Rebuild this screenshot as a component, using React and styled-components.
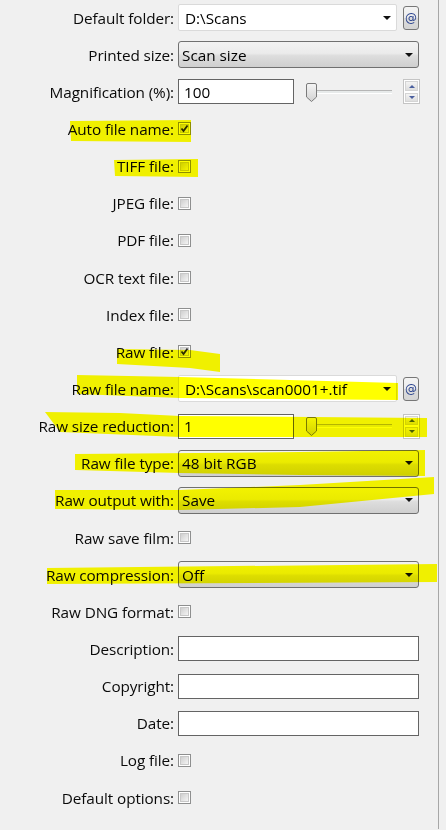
import React from "react";
import styled, { createGlobalStyle } from "styled-components";

const Global = createGlobalStyle`
  html, body {
    margin: 0;
    padding: 0;
    background: #f0f0f0;
  }
  body {
    font-family: "Open Sans", "Noto Sans", sans-serif;
  }
`;

const Page = styled.div`
  position: relative;
  width: 446px;
  height: 830px;
  overflow: hidden;
  background: #f0f0f0;
`;

const Panel = styled.div`
  width: 439px;
  height: 830px;
  border-right: 1px solid #a7a7a7;
  box-sizing: border-box;
  display: flex;
  flex-direction: column;
  margin-top: -1px;
`;

const Row = styled.div`
  display: grid;
  grid-template-columns: 174px 1fr;
  column-gap: 4px;
  align-items: center;
  height: 37.15px;
  flex: 0 0 auto;
`;

const Label = styled.div`
  text-align: right;
  font-size: 15.3px;
  color: #0a0a0a;
  white-space: nowrap;
  letter-spacing: -0.1px;
`;

const Controls = styled.div`
  display: flex;
  align-items: center;
`;

const EditCombo = styled.div`
  width: 219px;
  height: 27px;
  box-sizing: border-box;
  background: #fff;
  border: 1px solid #dadada;
  border-radius: 2px;
  display: flex;
  align-items: center;
  padding-left: 6px;
  font-size: 15.3px;
  color: #000;
  position: relative;
`;

const Arrow = styled.span`
  position: absolute;
  right: ${(p) => p.$right || 6}px;
  top: 50%;
  margin-top: -2px;
  width: 0;
  height: 0;
  border-left: 4px solid transparent;
  border-right: 4px solid transparent;
  border-top: 4px solid #101010;
`;

const AtButton = styled.div`
  width: 16px;
  height: 24px;
  margin-left: 6px;
  box-sizing: border-box;
  border: 1px solid #777;
  border-radius: 3px;
  background: linear-gradient(#f4f4f4 0%, #ebebeb 50%, #dcdcdc 51%, #d4d4d4 100%);
  display: flex;
  align-items: center;
  justify-content: center;
  font-size: 12px;
  color: #263f8c;
  font-family: "DejaVu Sans", sans-serif;
`;

const Select = styled.div`
  width: 241px;
  height: 27px;
  box-sizing: border-box;
  border: 1px solid #707070;
  border-radius: 3px;
  background: linear-gradient(#f2f2f2 0%, #ebebeb 45%, #dddddd 55%, #cfcfcf 100%);
  display: flex;
  align-items: center;
  padding-left: 3px;
  font-size: 15.3px;
  color: #000;
  position: relative;
`;

const TextBox = styled.div`
  width: ${(p) => p.$w || 241}px;
  height: 25px;
  box-sizing: border-box;
  background: #fff;
  border: 1px solid #646464;
  display: flex;
  align-items: center;
  padding-left: 5px;
  font-size: 15.3px;
  color: #000;
`;

const Slider = styled.div`
  position: relative;
  width: 86px;
  height: 20px;
  margin-left: 12px;
`;

const Track = styled.div`
  position: absolute;
  left: 3px;
  right: 0;
  top: 8px;
  height: 2px;
  background: #e7eaea;
  border-top: 1px solid #b5b5b5;
  border-bottom: 1px solid #fff;
`;

const Thumb = styled.svg`
  position: absolute;
  left: 0;
  top: 1px;
`;

const Spin = styled.div`
  width: 17px;
  height: 25px;
  margin-left: 11px;
  box-sizing: border-box;
  border: 1px solid #c4c4c4;
  display: flex;
  flex-direction: column;
  background: #fff;
`;

const SpinBtn = styled.div`
  flex: 1;
  margin: 1px;
  background: linear-gradient(#f3f3f3, #dedede);
  border: 1px solid #d4d4d4;
  display: flex;
  align-items: center;
  justify-content: center;
  &::after {
    content: "";
    width: 0;
    height: 0;
    border-left: 3px solid transparent;
    border-right: 3px solid transparent;
    ${(p) =>
      p.$up
        ? "border-bottom: 3px solid #4a5f9e;"
        : "border-top: 3px solid #4a5f9e;"}
  }
`;

const Check = styled.div`
  width: 13px;
  height: 13px;
  box-sizing: border-box;
  border: 1px solid #8e8f8f;
  background: #fff;
  padding: 1px;
  position: relative;
  &::before {
    content: "";
    display: block;
    width: 100%;
    height: 100%;
    box-sizing: border-box;
    border: 1px solid #c8c8c8;
    background: linear-gradient(135deg, #cfcfcf, #f4f4f4);
  }
`;

const Tick = styled.svg`
  position: absolute;
  left: 1px;
  top: 1px;
`;

const Highlights = styled.svg`
  position: absolute;
  left: 0;
  top: 0;
  pointer-events: none;
  mix-blend-mode: multiply;
`;

const Checkbox = ({ checked }) => (
  <Check>
    {checked && (
      <Tick width="9" height="9" viewBox="0 0 9 9">
        <path d="M1.5 4.5 L3.5 7 L7.5 1.5" fill="none" stroke="#2b2b2b" strokeWidth="1.8" />
      </Tick>
    )}
  </Check>
);

const SliderCtl = () => (
  <>
    <Slider>
      <Track />
      <Thumb width="11" height="19" viewBox="0 0 11 19">
        <defs>
          <linearGradient id="tg" x1="0" y1="0" x2="0" y2="1">
            <stop offset="0" stopColor="#f5f5f5" />
            <stop offset="1" stopColor="#d2d2d2" />
          </linearGradient>
        </defs>
        <path d="M0.5 2 Q0.5 0.5 2 0.5 L9 0.5 Q10.5 0.5 10.5 2 L10.5 14 L5.5 18.5 L0.5 14 Z" fill="url(#tg)" stroke="#7a7a7a" />
      </Thumb>
    </Slider>
    <Spin>
      <SpinBtn $up />
      <SpinBtn />
    </Spin>
  </>
);

const rows = [
  { label: "Default folder:", kind: "edit", value: "D:\\Scans" },
  { label: "Printed size:", kind: "select", value: "Scan size" },
  { label: "Magnification (%):", kind: "num", value: "100" },
  { label: "Auto file name:", kind: "check", checked: true },
  { label: "TIFF file:", kind: "check" },
  { label: "JPEG file:", kind: "check" },
  { label: "PDF file:", kind: "check" },
  { label: "OCR text file:", kind: "check" },
  { label: "Index file:", kind: "check" },
  { label: "Raw file:", kind: "check", checked: true },
  { label: "Raw file name:", kind: "edit", value: "D:\\Scans\\scan0001+.tif" },
  { label: "Raw size reduction:", kind: "num", value: "1" },
  { label: "Raw file type:", kind: "select", value: "48 bit RGB" },
  { label: "Raw output with:", kind: "select", value: "Save" },
  { label: "Raw save film:", kind: "check" },
  { label: "Raw compression:", kind: "select", value: "Off" },
  { label: "Raw DNG format:", kind: "check" },
  { label: "Description:", kind: "text" },
  { label: "Copyright:", kind: "text" },
  { label: "Date:", kind: "text" },
  { label: "Log file:", kind: "check" },
  { label: "Default options:", kind: "check" },
];

const renderControl = (r) => {
  switch (r.kind) {
    case "edit":
      return (
        <>
          <EditCombo>
            {r.value}
            <Arrow $right={5} />
          </EditCombo>
          <AtButton>@</AtButton>
        </>
      );
    case "select":
      return (
        <Select>
          {r.value}
          <Arrow $right={5} />
        </Select>
      );
    case "num":
      return (
        <>
          <TextBox $w={116}>{r.value}</TextBox>
          <SliderCtl />
        </>
      );
    case "text":
      return <TextBox />;
    default:
      return <Checkbox checked={r.checked} />;
  }
};

const marks = [
  "M70,121 L191,120 L191,142 L71,141 Z",
  "M114,160 L198,159 L198,177 L115,176 Z",
  "M117,349 L190,350 L220,354 L220,372 L190,368 L117,364 Z",
  "M77,375 L180,377 L398,383 L398,400 L180,398 L77,394 Z",
  "M45,412 L120,413 L180,416 L427,418 L427,437 L180,437 L60,432 Z",
  "M75,454 L300,452 L425,450 L425,476 L300,475 L180,473 L75,470 Z",
  "M55,490 L180,490 L300,485 L434,477 L434,494 L300,507 L180,510 L55,509 Z",
  "M47,568 L437,564 L437,582 L47,584 Z",
];

export default function App() {
  return (
    <Page>
      <Global />
      <Panel>
        {rows.map((r) => (
          <Row key={r.label}>
            <Label>{r.label}</Label>
            <Controls>{renderControl(r)}</Controls>
          </Row>
        ))}
      </Panel>
      <Highlights width="446" height="830" viewBox="0 0 446 830">
        {marks.map((d, i) => (
          <path key={i} d={d} fill="#ffff00" />
        ))}
      </Highlights>
    </Page>
  );
}
